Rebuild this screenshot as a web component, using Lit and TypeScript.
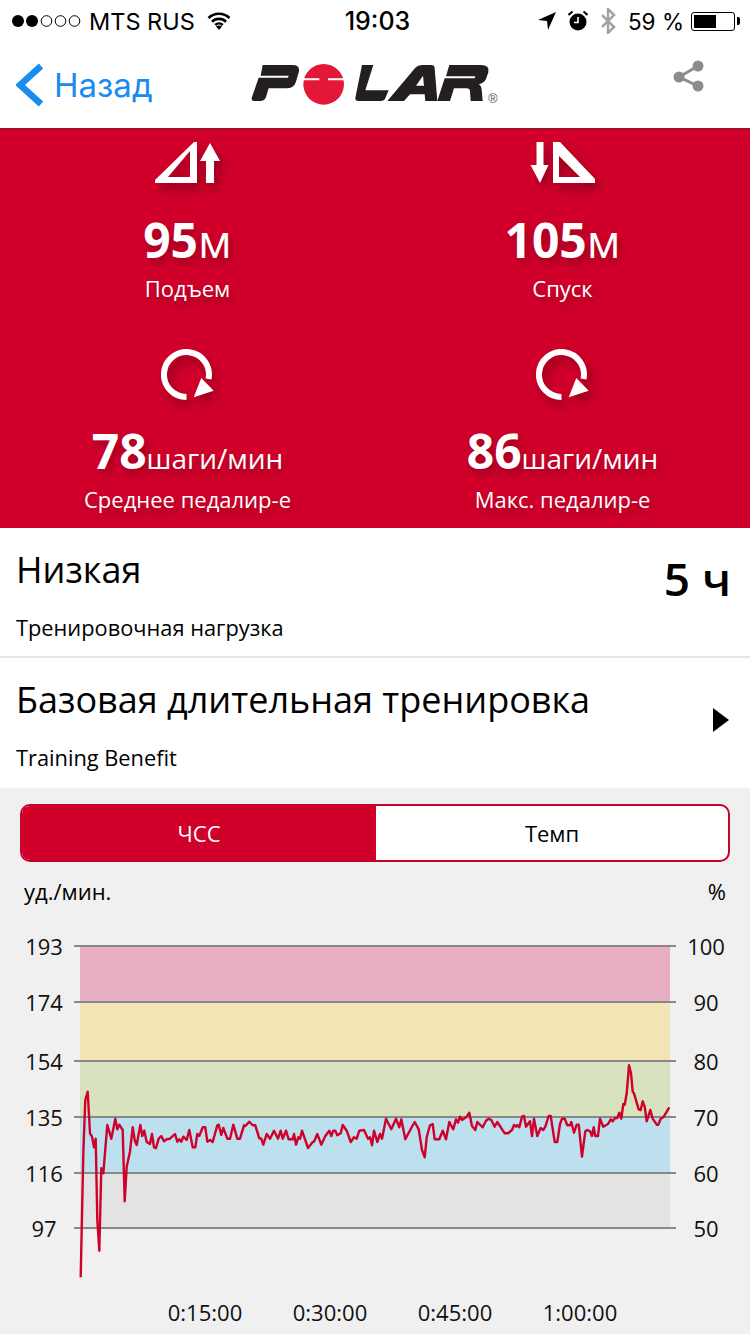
import {css, html, LitElement, svg} from "lit";
import {customElement} from "lit/decorators.js";

// chart traced in three pieces, each as [x, y] pairs at 3x of a crop
const toPoints = (raw: number[][], ox: number, oy: number) =>
  raw.map(([x, y]) => `${(ox + x / 3).toFixed(1)},${(oy + y / 3).toFixed(1)}`);

const trace1 = [[62,712],[70,340],[76,180],[83,155],[90,280],[96,290],[102,322],[107,296],[112,540],[118,632],[124,385],[130,400],[142,255],[154,296],[166,236],[172,268],[178,254],[188,270],[194,484],[200,380],[210,335],[218,262],[224,300],[230,315],[241,255],[247,288],[253,272],[260,306],[270,312],[276,282],[282,322],[288,324],[296,296],[304,288],[312,304],[320,298],[330,296],[345,282],[352,305],[358,298],[364,305],[370,290],[380,300],[388,270],[398,322],[406,322],[412,282],[418,288],[428,262],[436,262],[442,305],[450,300],[458,306],[472,256],[476,254],[484,285],[490,264],[502,296],[510,296],[520,254],[532,296],[540,296],[552,256],[556,258],[568,245],[578,256],[586,256],[598,295],[604,296],[610,314],[620,282],[630,296],[642,272],[654,296]];
const trace2 = [[32,212],[38,236],[48,212],[56,238],[68,238],[72,222],[78,254],[85,232],[90,236],[96,212],[114,264],[128,246],[132,245],[142,222],[154,254],[166,228],[178,212],[184,228],[190,212],[196,212],[202,226],[212,220],[218,195],[230,212],[242,246],[252,232],[260,236],[268,212],[282,210],[294,236],[300,232],[306,256],[312,212],[322,246],[330,222],[336,236],[348,176],[364,208],[378,176],[388,202],[394,178],[406,238],[424,204],[434,186],[446,208],[456,270],[464,292],[470,232],[480,196],[488,192],[494,238],[508,238],[518,212],[528,238],[538,186],[550,208],[558,178],[564,188],[570,170],[576,180],[590,170],[598,158],[606,198],[616,210],[622,186]];
const trace3 = [[38,232],[48,212],[56,206],[64,210],[74,230],[82,216],[104,250],[114,250],[126,240],[132,225],[138,230],[142,225],[148,232],[156,200],[162,198],[168,230],[180,214],[186,258],[192,206],[202,258],[212,234],[220,240],[226,230],[236,198],[242,198],[254,276],[262,276],[270,222],[276,206],[284,206],[292,226],[300,226],[304,216],[312,248],[320,224],[326,224],[336,320],[346,244],[352,240],[360,244],[366,258],[371,232],[376,258],[384,258],[390,206],[400,230],[414,222],[422,208],[428,214],[434,205],[442,204],[448,188],[454,206],[460,162],[464,164],[470,130],[477,46],[483,70],[488,125],[492,130],[506,178],[512,180],[518,154],[524,170],[530,214],[541,180],[548,206],[560,224],[565,224],[572,206],[580,202],[598,172]];

const hrLine = [
  ...toPoints(trace1, 60, 1040),
  ...toPoints(trace2, 270, 1060),
  ...toPoints(trace3, 470, 1050),
].join(" ");

const grid = [946, 1002, 1061, 1117, 1173, 1228];
const bands = ["#e8afc4", "#f2e4b4", "#d9e2bf", "#bde0ef", "#e3e3e3"];
const leftAxis = ["193", "174", "154", "135", "116", "97"];
const rightAxis = ["100", "90", "80", "70", "60", "50"];
const timeAxis = [[205, "0:15:00"], [330, "0:30:00"], [455, "0:45:00"], [580, "1:00:00"]];

const iconAscent = svg`
  <path fill-rule="evenodd" d="M0 41V38L39 0H42V41ZM13 35H35V9Z"/>
  <path d="M55 1L65 19H59V41H51V19H45Z"/>`;
const iconDescent = svg`
  <path d="M10 0H17V23H22L13.500 41L4 23H10Z" transform="translate(-3.500 0)"/>
  <path fill-rule="evenodd" d="M23 0H30L65 37V41H23ZM29 14V35H50Z"/>`;
const iconCadence = svg`
  <path d="M25.500 48A22.500 22.500 0 1 1 47.500 30" fill="none" stroke="#fff" stroke-width="6"/>
  <path d="M32.700 48.300L40.300 29L52.700 41.700Z"/>`;

const stats = [
  {icon: iconAscent, box: "0 0 65 41", w: 65, h: 41, value: "95", unit: "м", label: "Подъем", wide: false},
  {icon: iconDescent, box: "0 0 65 41", w: 65, h: 41, value: "105", unit: "м", label: "Спуск", wide: false},
  {icon: iconCadence, box: "0 0 54 52", w: 54, h: 52, value: "78", unit: "шаги/мин", label: "Среднее педалир-е", wide: true},
  {icon: iconCadence, box: "0 0 54 52", w: 54, h: 52, value: "86", unit: "шаги/мин", label: "Макс. педалир-е", wide: true},
];

@customElement("app-root")
export class AppRootElement extends LitElement {
  private renderStatus() {
    return html`
      <div class="status">
        <div class="status-side">
          <svg class="dots" width="70" height="14" viewBox="0 0 70 14">
            <circle cx="7" cy="7" r="6"/>
            <circle cx="21" cy="7" r="6"/>
            <circle cx="35.500" cy="7" r="5.300" fill="none" stroke="#000" stroke-width="1"/>
            <circle cx="49.500" cy="7" r="5.300" fill="none" stroke="#000" stroke-width="1"/>
            <circle cx="63.500" cy="7" r="5.300" fill="none" stroke="#000" stroke-width="1"/>
          </svg>
          <span class="carrier">MTS RUS</span>
          <svg width="24" height="18" viewBox="0 0 24 18">
            <path d="M1.500 6A15 15 0 0 1 22.500 6M5 9.700A10 10 0 0 1 19 9.700M8.300 13A5.300 5.300 0 0 1 15.700 13" fill="none" stroke="#000" stroke-width="2.600"/>
            <path d="M9 14.500L12 18L15 14.500Q12 12.500 9 14.500Z"/>
          </svg>
        </div>
        <span class="time">19:03</span>
        <div class="status-side right">
          <svg width="20" height="20" viewBox="0 0 20 20"><path d="M1 9L19 1L11 19L10 10Z"/></svg>
          <svg class="alarm" width="20" height="22" viewBox="0 0 20 22">
            <circle cx="10" cy="12" r="8.500"/>
            <path d="M10 7V12.500H6" fill="none" stroke="#fff" stroke-width="1.600"/>
            <path d="M0.500 5L4.500 1.500M19.500 5L15.500 1.500" stroke="#000" stroke-width="2"/>
          </svg>
          <svg class="bt" width="16" height="26" viewBox="0 0 16 24" preserveAspectRatio="none">
            <path d="M2 6.500L14 17.500L8 23V1L14 6.500L2 17.500" fill="none" stroke="#a2a2a2" stroke-width="2.400"/>
          </svg>
          <span class="percent">59 %</span>
          <div class="battery"><div class="battery-fill"></div></div>
        </div>
      </div>
    `;
  }

  private renderNav() {
    return html`
      <nav class="nav">
        <div class="back">
          <svg width="28" height="44" viewBox="0 0 28 44">
            <path d="M25 3L4 22L25 41" fill="none" stroke="#1a8cf0" stroke-width="6.500"/>
          </svg>
          <span>Назад</span>
        </div>
        <svg class="logo" width="270" height="60" viewBox="0 0 810 180">
          <path fill="#231f20" d="M68 30H158Q182 30 176 52L168 80Q162 100 138 100H86L78 126Q74 138 60 138H42Q32 138 36 126L56 68H144L146 62H62Z"/>
          <circle cx="251" cy="88" r="61" fill="#e31837"/>
          <path fill="#fff" d="M186 70H238V76H186ZM264 70H316V76H264Z"/>
          <path fill="#231f20" d="M366 30H400L376 106H446L436 130Q433 138 422 138H356Q342 138 347 124Z"/>
          <path fill="#231f20" fill-rule="evenodd" d="M526 38Q533 30 546 30H574Q583 30 584 40L592 138H556L554 118H510L492 138H442ZM528 92H552L549 62Z"/>
          <path fill="#231f20" d="M628 30H722Q750 30 745 52L738 72Q733 84 716 88Q724 92 725 104L728 138H692L690 108Q689 100 680 100H642L630 138H592L614 70H704L706 64H618Z"/>
          <text x="745" y="143" class="reg">®</text>
        </svg>
        <svg class="share" width="36" height="36" viewBox="0 0 36 36">
          <path d="M26 7L7 18L26 27" fill="none" stroke="#8c8c8c" stroke-width="3"/>
          <circle cx="26" cy="7" r="5.500" fill="#8c8c8c"/>
          <circle cx="7" cy="18" r="5.500" fill="#8c8c8c"/>
          <circle cx="26" cy="27" r="5.500" fill="#8c8c8c"/>
        </svg>
      </nav>
    `;
  }

  private renderStats() {
    return html`
      <section class="stats">
        <div class="stats-grid">
          ${stats.map((s) => html`
            <div class="stat">
              <div class="stat-icon ${s.wide ? "low" : ""}">
                <svg width=${s.w} height=${s.h} viewBox=${s.box} fill="#fff">${s.icon}</svg>
              </div>
              <div class="stat-value">${s.value}<span class="stat-unit ${s.wide ? "small" : ""}">${s.unit}</span></div>
              <div class="stat-label">${s.label}</div>
            </div>
          `)}
        </div>
      </section>
    `;
  }

  private renderChart() {
    return svg`
      ${bands.map((fill, i) => svg`
        <rect x="80" y=${grid[i]} width="590" height=${grid[i + 1] - grid[i]} fill=${fill}></rect>
      `)}
      ${grid.map((y, i) => svg`
        <line x1="74" x2="676" y1=${y} y2=${y} stroke="#888" stroke-width="2"></line>
        <text x="44" y=${y + 9} text-anchor="middle">${leftAxis[i]}</text>
        <text x="706" y=${y + 9} text-anchor="middle">${rightAxis[i]}</text>
      `)}
      <polyline points=${hrLine} fill="none" stroke="#d0002a" stroke-width="2.400" stroke-linejoin="round"></polyline>
      ${timeAxis.map(([x, t]) => svg`
        <text x=${x} y="1321" text-anchor="middle">${t}</text>
      `)}
    `;
  }

  protected render(): unknown {
    return html`
      ${this.renderStatus()}
      ${this.renderNav()}
      ${this.renderStats()}
      <div class="row">
        <div>
          <div class="row-title">Низкая</div>
          <div class="row-sub">Тренировочная нагрузка</div>
        </div>
        <div class="row-value">5 ч</div>
      </div>
      <div class="row row-benefit">
        <div>
          <div class="row-title">Базовая длительная тренировка</div>
          <div class="row-sub">Training Benefit</div>
        </div>
        <div class="row-arrow"></div>
      </div>
      <section class="graph">
        <div class="tabs">
          <div class="tab active">ЧСС</div>
          <div class="tab">Темп</div>
        </div>
        <div class="units"><span>уд./мин.</span><span>%</span></div>
        <svg class="chart" width="750" height="414" viewBox="0 920 750 414">${this.renderChart()}</svg>
      </section>
    `;
  }

  static styles = css`
    :host {
      display: block;
      width: 750px;
      height: 1334px;
      overflow: hidden;
      background: #fff;
      color: #000;
      font-family: "Open Sans", "Noto Sans", sans-serif;
    }

    svg {
      display: block;
      flex: none;
    }

    .status {
      height: 40px;
      box-sizing: border-box;
      padding: 2px 15px 0 11px;
      display: grid;
      grid-template-columns: 1fr auto 1fr;
      align-items: center;
      font-family: Inter, "Liberation Sans", sans-serif;
      font-size: 23.500px;
    }

    .status-side {
      display: flex;
      align-items: center;
    }

    .status-side.right {
      justify-content: flex-end;
    }

    .carrier {
      margin: 0 12px 0 8px;
    }

    .time {
      font-size: 25px;
      font-weight: 500;
      margin-left: 9px;
    }

    .alarm {
      margin-left: 11px;
    }

    .bt {
      margin-left: 12px;
    }

    .percent {
      font-size: 22.500px;
      margin: 0 7px 0 12px;
    }

    .battery {
      width: 44px;
      height: 19px;
      box-sizing: border-box;
      border: 1.500px solid #000;
      border-radius: 3px;
      padding: 2px;
      position: relative;
    }

    .battery::after {
      content: "";
      position: absolute;
      right: -6px;
      top: 4px;
      width: 3px;
      height: 8px;
      background: #000;
      border-radius: 0 2px 2px 0;
    }

    .battery-fill {
      width: 57%;
      height: 100%;
      background: #000;
    }

    .nav {
      height: 88px;
      display: flex;
      align-items: center;
      padding: 0 42px 0 16px;
      box-sizing: border-box;
    }

    .back {
      display: flex;
      flex: none;
      align-items: center;
      gap: 10px;
      width: 224px;
      color: #1a8cf0;
      font-family: Inter, "Liberation Sans", sans-serif;
      font-size: 33px;
      margin-top: 2px;
    }

    .logo {
      margin: 2px auto 0 0;
    }

    .reg {
      font-size: 38px;
      fill: #555;
      font-family: "Liberation Sans", sans-serif;
    }

    .share {
      margin-top: -14px;
    }

    .stats {
      height: 400px;
      box-sizing: border-box;
      border-top: 2px solid #a80a2a;
      background: #d0002a;
      color: #fff;
      overflow: hidden;
      text-shadow: 3px 5px 8px rgba(0, 0, 0, 0.25);
    }

    .stats-grid {
      margin-top: -24px;
      display: grid;
      grid-template-columns: 1fr 1fr;
      grid-auto-rows: 211px;
    }

    .stat {
      display: flex;
      flex-direction: column;
      align-items: center;
      padding-top: 27px;
    }

    .stat-icon {
      height: 58px;
      display: flex;
      align-items: center;
      filter: drop-shadow(4px 6px 5px rgba(0, 0, 0, 0.3));
    }

    .stat-icon.low {
      padding-top: 4px;
      height: 54px;
    }

    .stat-value {
      margin-top: 19px;
      font-size: 48px;
      line-height: 59px;
      font-weight: 700;
      white-space: nowrap;
    }

    .stat-unit {
      font-size: 46px;
      font-weight: 400;
      line-height: 1;
    }

    .stat-unit.small {
      font-size: 28px;
    }

    .stat-label {
      margin-top: 4px;
      font-size: 22px;
      line-height: 30px;
    }

    .row {
      height: 130px;
      box-sizing: border-box;
      padding: 17px 19px 0 16px;
      display: flex;
      justify-content: space-between;
      border-bottom: 2px solid #e4e4e4;
    }

    .row-benefit {
      border-bottom: none;
    }

    .row-title {
      font-size: 36px;
      line-height: 50px;
    }

    .row-sub {
      font-size: 21.800px;
      line-height: 30px;
      margin-top: 18px;
    }

    .row-value {
      font-size: 46px;
      line-height: 66px;
      font-weight: 600;
    }

    .row-arrow {
      margin-top: 33px;
      width: 0;
      height: 0;
      border-left: 16px solid #000;
      border-top: 12px solid transparent;
      border-bottom: 12px solid transparent;
      margin-right: 2px;
    }

    .graph {
      height: 546px;
      background: #f0f0f0;
      padding-top: 16px;
      box-sizing: border-box;
    }

    .tabs {
      margin: 0 20px;
      height: 58px;
      box-sizing: border-box;
      display: grid;
      grid-template-columns: 354px 1fr;
      border: 2px solid #c8002c;
      border-radius: 10px;
      overflow: hidden;
      background: #fff;
      font-size: 22px;
    }

    .tab {
      display: flex;
      align-items: center;
      justify-content: center;
    }

    .tab.active {
      background: #d0002a;
      color: #fff;
    }

    .units {
      display: flex;
      justify-content: space-between;
      padding: 14px 24px 0;
      height: 44px;
      font-size: 22px;
      line-height: 30px;
    }

    .chart {
      font-size: 22px;
    }

    .chart text {
      fill: #111;
    }
  `;
}
